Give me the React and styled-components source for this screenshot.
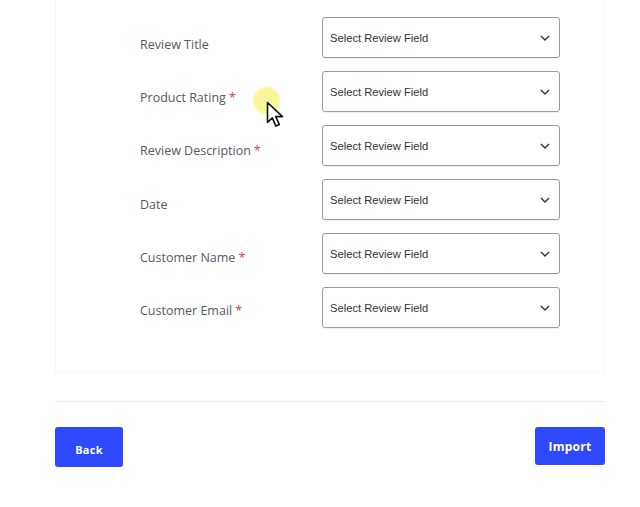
import styled, { createGlobalStyle } from "styled-components";

const GlobalStyle = createGlobalStyle`
  html, body {
    margin: 0;
    background: #ffffff;
  }
  body {
    font-family: "Open Sans", "Noto Sans", sans-serif;
  }
`;

const Page = styled.div`
  position: relative;
  width: 640px;
  height: 507px;
  padding-left: 55px;
  box-sizing: border-box;
`;

const Card = styled.div`
  width: 550px;
  box-sizing: border-box;
  border: 1px solid #f6f6f6;
  border-top: none;
  padding: 17px 0 44px 84px;
  display: flex;
  flex-direction: column;
  gap: 13px;
`;

const Row = styled.div`
  display: grid;
  grid-template-columns: 182px 238px;
  align-items: center;
  height: 41px;
`;

const Label = styled.div`
  font-size: 12.5px;
  color: #555a61;
  padding-top: ${(p) => p.$offset}px;
`;

const Star = styled.span`
  color: #e23b3b;
  margin-left: 3px;
`;

const Select = styled.div`
  height: 41px;
  box-sizing: border-box;
  border: 1px solid #9a9a9a;
  border-radius: 3px;
  display: flex;
  align-items: center;
  justify-content: space-between;
  padding: 0 9px 0 7px;
  font-family: "Liberation Sans", Arial, sans-serif;
  font-size: 11.2px;
  color: #333;
  box-shadow: 0 1px 1px rgba(0, 0, 0, 0.06);
`;

const Divider = styled.div`
  width: 550px;
  height: 1px;
  background: #ececec;
  margin-top: 28px;
`;

const Footer = styled.div`
  width: 550px;
  display: flex;
  justify-content: space-between;
  align-items: flex-start;
  margin-top: 25px;
`;

const Button = styled.button`
  background: #2f49ff;
  color: #fff;
  border: none;
  border-radius: 3px;
  font-family: "Open Sans", sans-serif;
  font-weight: 700;
  font-size: ${(p) => (p.$small ? "11px" : "12px")};
  letter-spacing: 0.3px;
  width: ${(p) => p.$w}px;
  height: ${(p) => p.$h}px;
  padding: ${(p) => (p.$small ? "4px 0 0" : "0")};
`;

const Pointer = styled.div`
  position: absolute;
  left: 253px;
  top: 87px;
  width: 32px;
  height: 42px;
  pointer-events: none;
`;

const Glow = styled.div`
  position: absolute;
  left: 0;
  top: 0;
  width: 27px;
  height: 27px;
  border-radius: 50%;
  background: #f8f69a;
  filter: blur(1px);
`;

const Chevron = () => (
  <svg width="10" height="6" viewBox="0 0 10 6">
    <path d="M1 1l4 4 4-4" fill="none" stroke="#333" strokeWidth="1.4" />
  </svg>
);

const fields = [
  { label: "Review Title" },
  { label: "Product Rating", required: true },
  { label: "Review Description", required: true },
  { label: "Date" },
  { label: "Customer Name", required: true },
  { label: "Customer Email", required: true },
];

export default function App() {
  return (
    <>
      <GlobalStyle />
      <Page>
        <Card>
          {fields.map((f, i) => (
            <Row key={f.label}>
              <Label $offset={14 - i * 1.6}>
                {f.label}
                {f.required && <Star>*</Star>}
              </Label>
              <Select>
                <span>Select Review Field</span>
                <Chevron />
              </Select>
            </Row>
          ))}
        </Card>
        <Divider />
        <Footer>
          <Button $w={68} $h={40} $small>
            Back
          </Button>
          <Button $w={70} $h={38}>
            Import
          </Button>
        </Footer>
        <Pointer>
          <Glow />
          <svg
            width="20"
            height="28"
            viewBox="0 0 20 28"
            style={{ position: "absolute", left: 13, top: 14 }}
          >
            <path
              d="M1.5 1.5v20l4.8-4.6 3.6 8.2 3.4-1.5-3.6-8h6.8z"
              fill="#fff"
              stroke="#111"
              strokeWidth="1.6"
              strokeLinejoin="round"
            />
          </svg>
        </Pointer>
      </Page>
    </>
  );
}
